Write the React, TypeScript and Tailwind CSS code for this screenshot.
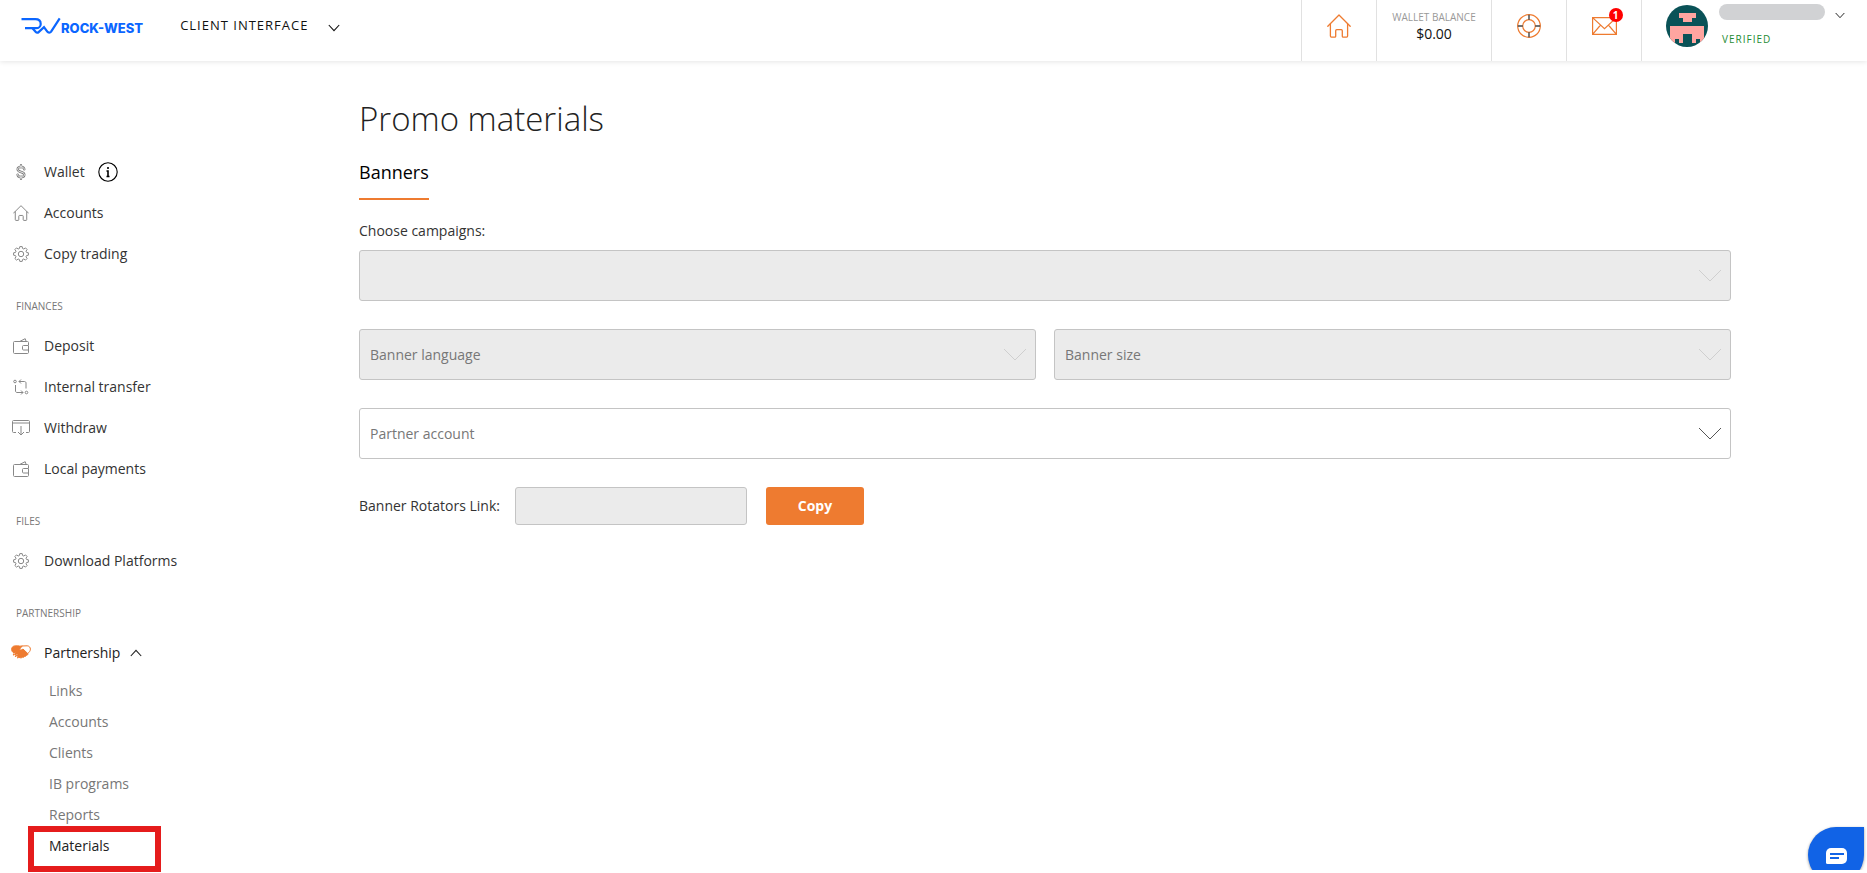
import type { ReactNode } from "react";

interface NavItem {
  label: string;
  icon: ReactNode;
  info?: boolean;
}

interface NavGroup {
  title?: string;
  items: NavItem[];
}

function Chevron({ className }: { className: string }) {
  return (
    <svg className={className} viewBox="0 0 12 8" fill="none" stroke="currentColor" strokeWidth="1.1">
      <path d="M.8 1 6 6.600 11.200 1" />
    </svg>
  );
}

function HomeIcon({ className, strokeWidth }: { className: string; strokeWidth: number }) {
  return (
    <svg
      className={className}
      viewBox="0 0 24 24"
      fill="none"
      stroke="currentColor"
      strokeWidth={strokeWidth}
      strokeLinejoin="round"
      strokeLinecap="round"
    >
      <path d="M.8 12.200 12 1l11.200 11.200" />
      <path d="M3.400 10v12c0 .7.4 1.100 1 1.100h3.400c.5 0 .9-.4.9-.9v-5.400c0-.7.4-1.100 1-1.100h4.600c.6 0 1 .4 1 1.100v5.400c0 .5.4.9.9.9h3.400c.6 0 1-.4 1-1.100V10" />
    </svg>
  );
}

function DollarIcon() {
  const shape =
    "M8 1.200v2M8 12.800v2M11.300 5.300C11 3.700 9.800 2.900 8 2.900S4.700 3.700 4.700 5.300C4.700 8.700 11.300 7.300 11.300 10.700c0 1.600-1.400 2.400-3.300 2.400s-3.200-.9-3.400-2.500";
  return (
    <svg className="h-4 w-4" viewBox="0 0 16 16" fill="none" strokeLinecap="round">
      <path d={shape} stroke="#777" strokeWidth="2.400" />
      <path d={shape} stroke="#fff" strokeWidth=".9" />
    </svg>
  );
}

function GearIcon() {
  return (
    <svg className="h-4 w-4" viewBox="0 0 16 16" fill="none" stroke="currentColor" strokeLinejoin="round">
      <circle cx="8" cy="8" r="2.700" />
      <path d="M6.800.6h2.400l.4 1.900 1.200.5 1.700-1.100 1.600 1.600L13 5.200l.5 1.200 1.900.4v2.400l-1.900.4-.5 1.200 1.100 1.700-1.600 1.600-1.700-1.100-1.200.5-.4 1.900H6.800l-.4-1.900-1.200-.5-1.700 1.100-1.600-1.600L3 10.800l-.5-1.200-1.900-.4V6.800l1.900-.4L3 5.200 1.900 3.500l1.600-1.600L5.200 3l1.200-.5z" />
    </svg>
  );
}

function WalletIcon() {
  return (
    <svg className="h-4 w-4" viewBox="0 0 16 16" fill="none" stroke="currentColor" strokeLinejoin="round">
      <path d="M15.500 7V4.500c0-.6-.4-1-1-1h-13c-.6 0-1 .4-1 1v10c0 .6.4 1 1 1h13c.6 0 1-.4 1-1V12" />
      <path d="M15.500 7.500h-5c-.6 0-1 .4-1 1V11c0 .6.4 1 1 1h5z" />
      <path d="m7 3.300 5.200-2.600.9 2.600" />
    </svg>
  );
}

function TransferIcon() {
  return (
    <svg className="h-4 w-4" viewBox="0 0 16 16" fill="none" stroke="currentColor">
      <circle cx="2" cy="2.500" r="1.300" />
      <circle cx="13.500" cy="13.500" r="1.300" />
      <path d="M6 2.500h5.500c.8 0 1.500.6 1.500 1.500v5.500M8 .5l-2 2 2 2" />
      <path d="M10 13.500H4c-.9 0-1.500-.7-1.500-1.500V6M8 11.500l2 2-2 2" />
    </svg>
  );
}

function WithdrawIcon() {
  return (
    <svg className="h-4 w-[18px]" viewBox="0 0 18 16" fill="none" stroke="currentColor">
      <path d="M4 12.500H1.500c-.6 0-1-.4-1-1v-10c0-.6.4-1 1-1h15c.6 0 1 .4 1 1v10c0 .6-.4 1-1 1H14" />
      <path d="M.5 3h17M9 6v9M6 12l3 3 3-3" />
    </svg>
  );
}

function HandshakeIcon() {
  return (
    <svg className="h-[14px] w-5" viewBox="0 0 20 14" fill="none" stroke="#ee7b30" strokeLinejoin="round">
      <path
        d="M.6 4.500C.6 2 2.400.9 4 .9c2 0 3.300-.2 5 .3l2.200-.3-2.600 3.300c.8 1.200 2.200.9 3.400-.2l4.800 4.600c.4 1-.5 1.800-1.400 1.500-.1 1-1 1.500-1.900 1.200-.3 1-1.200 1.300-2 .9-1 .9-2.300.8-3.500.1L3 8.200C1.600 7.200.6 6 .6 4.500z"
        fill="#ee7b30"
      />
      <path d="m11 1 5.200-.2c2 .1 3.200 1.700 3.200 3.300 0 1.800-1.200 3.200-2.600 4.400" />
      <path d="m2.600 9.800 1.600-1.900M4.600 11.300l1.700-2M6.800 12.600l1.400-1.800" strokeWidth="1.500" strokeLinecap="round" />
      <path d="m3.400 8.700.6-.8M5.400 10.200l.6-.8" stroke="#fff" strokeWidth=".7" />
    </svg>
  );
}

const groups: NavGroup[] = [
  {
    items: [
      { label: "Wallet", icon: <DollarIcon />, info: true },
      { label: "Accounts", icon: <HomeIcon className="h-4 w-4" strokeWidth={1.5} /> },
      { label: "Copy trading", icon: <GearIcon /> },
    ],
  },
  {
    title: "FINANCES",
    items: [
      { label: "Deposit", icon: <WalletIcon /> },
      { label: "Internal transfer", icon: <TransferIcon /> },
      { label: "Withdraw", icon: <WithdrawIcon /> },
      { label: "Local payments", icon: <WalletIcon /> },
    ],
  },
  { title: "FILES", items: [{ label: "Download Platforms", icon: <GearIcon /> }] },
];

const partnershipLinks = ["Links", "Accounts", "Clients", "IB programs", "Reports"];

function Logo() {
  return (
    <a href="#" className="flex items-center text-[#0b66ff]">
      <svg className="h-[18px] w-10" viewBox="0 0 40 18" fill="none" stroke="currentColor" strokeWidth="2.200">
        <path d="M.5 2.200h13.800c3.400 0 5.400 2 5.400 4.700 0 2.500-2 4.300-4.600 4.300H4" />
        <path d="m11.500 11.300 3.300 3.700c.8.900 2 .9 2.800.1l5.400-5 3.300 4.600c.9 1.200 2.900 1.200 3.800-.1L38.700 1.300" />
      </svg>
      <span className="pt-1 font-['Inter',sans-serif] text-[13px] leading-4 font-extrabold">ROCK-WEST</span>
    </a>
  );
}

function Avatar() {
  return (
    <svg className="h-[42px] w-[42px] rounded-full" viewBox="0 0 42 42" shapeRendering="crispEdges">
      <rect width="42" height="42" fill="#0a5257" />
      <path
        d="M12.500 8.200h17v4.500h-4V17h-8.500v-4.300h-4.500zM4 20.700h34V38h-4v-4h-4.200v4h-4.300v-8.700H17V38h-4.300v-4H8.500v4H4z"
        fill="#ffa5a0"
      />
    </svg>
  );
}

function Header() {
  return (
    <header className="flex h-[61px] items-stretch shadow-[0_1px_5px_rgba(0,0,0,0.1)]">
      <div className="flex h-[52px] items-center pl-[21px]">
        <Logo />
        <button className="ml-[37px] flex items-center gap-5 text-[13px] font-medium tracking-[1px]">
          CLIENT INTERFACE
          <Chevron className="mt-1 h-2 w-3" />
        </button>
      </div>
      <div className="ml-auto flex divide-x divide-[#e1e1e1] border-l border-[#e1e1e1]">
        <a href="#" aria-label="Home" className="flex w-[75px] justify-center pt-[14px] text-[#ee7b30]">
          <HomeIcon className="h-6 w-6" strokeWidth={1.3} />
        </a>
        <a href="#" className="w-[115px] pt-[9px] text-center">
          <span className="block text-[10px] leading-4 text-[#999]">WALLET BALANCE</span>
          <span className="block text-[14px] leading-[18px]">$0.00</span>
        </a>
        <a href="#" aria-label="Support" className="flex w-[75px] justify-center pt-[14px]">
          <svg className="h-6 w-6" viewBox="0 0 24 24" fill="none" stroke="#ee7b30" strokeWidth="1.200">
            <circle cx="12" cy="12" r="11.300" />
            <circle cx="12" cy="12" r="6.300" />
            <path d="M12 .8v5M12 18.200v5M.8 12h5M18.200 12h5" stroke="#444" strokeWidth="1.400" />
          </svg>
        </a>
        <a href="#" aria-label="Messages" className="flex w-[75px] justify-center pt-[17px]">
          <span className="relative h-[18px] w-[25px]">
            <svg className="h-[18px] w-[25px]" viewBox="0 0 25 18" fill="none" stroke="#ee7b30" strokeWidth="1.200">
              <path d="M.6.6h23.800v16.800H.6zM.6.6l11.900 11L24.400.6M.6 17.400l8-9.400M24.400 17.400 16.400 8" />
            </svg>
            <span className="absolute -top-[9px] -right-[6px] flex h-[14px] w-[14px] items-center justify-center rounded-full bg-[#f00] text-[10px] leading-none font-bold text-white">
              1
            </span>
          </span>
        </a>
        <button className="flex w-[225px] items-start pl-6 text-left">
          <span className="mt-[5px]">
            <Avatar />
          </span>
          <span className="ml-[11px] mt-1">
            <span className="block h-4 w-[106px] rounded-full bg-[#d1d2d4]" />
            <span className="mt-[11px] block pl-[3px] text-[10px] leading-4 font-medium tracking-[1px] text-[#1e8c33]">
              VERIFIED
            </span>
          </span>
          <Chevron className="mt-3 ml-[10px] h-[7px] w-[10px]" />
        </button>
      </div>
    </header>
  );
}

function Sidebar() {
  return (
    <nav className="w-[359px] shrink-0 pt-[90px] pb-3 text-[14px] text-[#333]">
      {groups.map((group) => (
        <div key={group.title ?? "main"}>
          {group.title && <SectionTitle title={group.title} />}
          {group.items.map((item) => (
            <a key={item.label} href="#" className="flex h-[41px] items-center">
              <span className="flex w-[42px] justify-center text-[#888]">{item.icon}</span>
              <span className="pl-[2px]">{item.label}</span>
              {item.info && (
                <svg className="ml-[13px] h-5 w-5" viewBox="0 0 20 20" fill="none" stroke="#000">
                  <circle cx="10" cy="10" r="9.200" strokeWidth="1.100" />
                  <path d="M10 5v2M8.500 9H10v5.500M8.500 14.500h3" strokeWidth="1.600" />
                </svg>
              )}
            </a>
          ))}
        </div>
      ))}
      <SectionTitle title="PARTNERSHIP" />
      <button className="flex h-10 items-center text-[#222]">
        <span className="flex w-[42px] justify-center">
          <HandshakeIcon />
        </span>
        <span className="pl-[2px]">Partnership</span>
        <Chevron className="mt-[2px] ml-[10px] h-2 w-3 rotate-180" />
      </button>
      <ul className="pt-[3px] pl-[49px] text-[#777]">
        {partnershipLinks.map((label) => (
          <li key={label} className="flex h-[31px] items-center">
            <a href="#">{label}</a>
          </li>
        ))}
        <li className="relative flex h-[31px] items-center text-[#222]">
          <a href="#">Materials</a>
          <span className="pointer-events-none absolute -top-1 -left-[21px] h-[46px] w-[133px] border-[6px] border-[#e51c1c]" />
        </li>
      </ul>
    </nav>
  );
}

function SectionTitle({ title }: { title: string }) {
  return <h3 className="h-[51px] pt-[22px] pl-4 text-[10px] leading-5 text-[#777]">{title}</h3>;
}

function SelectBox({ id, label, disabled }: { id: string; label: string; disabled?: boolean }) {
  return (
    <div className="relative">
      <select
        id={id}
        aria-label={label || undefined}
        disabled={disabled}
        className="block h-[51px] w-full appearance-none rounded-[3px] border border-[#c4c4c4] bg-white px-[10px] text-[14px] text-[#777] opacity-100 disabled:bg-[#ebebeb]"
      >
        <option>{label}</option>
      </select>
      <svg
        className={`pointer-events-none absolute top-[19px] right-[9px] h-[13px] w-6 ${disabled ? "text-[#cfcfcf]" : "text-[#555]"}`}
        viewBox="0 0 24 13"
        fill="none"
        stroke="currentColor"
      >
        <path d="M1 1l11 11L23 1" />
      </svg>
    </div>
  );
}

function PromoMaterials() {
  return (
    <main className="min-w-0 flex-1 pt-[37px] pr-[136px]">
      <h1 className="text-[33px] leading-[42px] font-light text-[#222]">Promo materials</h1>
      <div className="mt-[19px] flex">
        <button className="h-[41px] border-b-2 border-[#ee7b30] pb-[14px] text-[18px] leading-6 text-black">Banners</button>
      </div>
      <label htmlFor="campaigns" className="mt-[21px] mb-[9px] block text-[14px] leading-5 text-[#333]">
        Choose campaigns:
      </label>
      <div className="flex flex-col gap-7">
        <SelectBox id="campaigns" label="" disabled />
        <div className="grid grid-cols-2 gap-[18px]">
          <SelectBox id="language" label="Banner language" disabled />
          <SelectBox id="size" label="Banner size" disabled />
        </div>
        <SelectBox id="account" label="Partner account" />
        <div className="flex items-center">
          <label htmlFor="rotator" className="w-[156px] pb-[2px] text-[14px] text-[#333]">
            Banner Rotators Link:
          </label>
          <input id="rotator" readOnly className="h-[38px] w-[232px] rounded-[3px] border border-[#c4c4c4] bg-[#ebebeb] px-2" />
          <button className="ml-[19px] h-[38px] w-[98px] rounded-[3px] bg-[#ee7b30] pb-[2px] text-[14px] font-bold text-white">
            Copy
          </button>
        </div>
      </div>
    </main>
  );
}

function ChatButton() {
  return (
    <div className="fixed right-0 bottom-[3px] h-[46px] w-[62px] overflow-hidden pt-[3px] pl-[3px]">
      <button
        aria-label="Open chat"
        className="flex h-14 w-14 justify-center rounded-full rounded-tr-[6px] bg-[#1163e6] pt-[21px] shadow-[0_1px_3px_rgba(0,0,0,0.4)]"
      >
        <svg className="h-4 w-[21px]" viewBox="0 0 21 16">
          <path d="M5 0h11a5 5 0 0 1 5 5v6a5 5 0 0 1-5 5H1.500A1.500 1.500 0 0 1 0 14.500V5a5 5 0 0 1 5-5z" fill="#fff" />
          <path d="M4 6h14M4 10h9" stroke="#1163e6" strokeWidth="1.800" />
        </svg>
      </button>
    </div>
  );
}

export default function App() {
  return (
    <div className="min-h-screen bg-white font-['Open_Sans',sans-serif] text-[#111]">
      <Header />
      <div className="flex">
        <Sidebar />
        <PromoMaterials />
      </div>
      <ChatButton />
    </div>
  );
}
